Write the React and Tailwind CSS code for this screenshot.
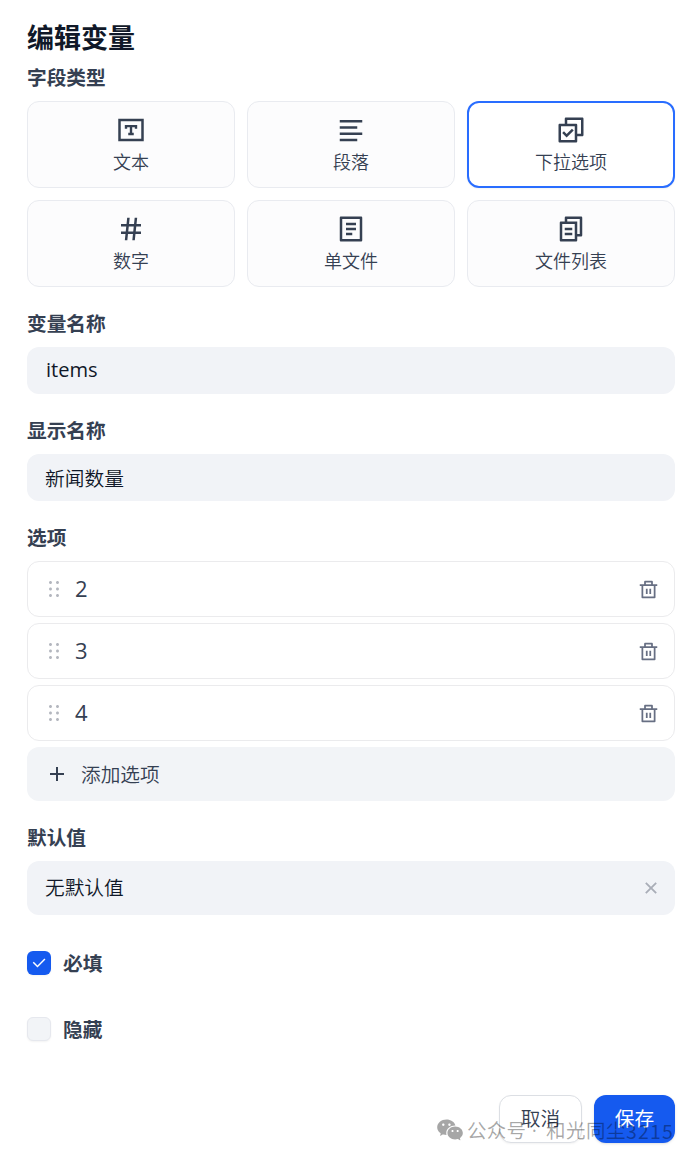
import { useState } from "react";
import {
  RiAddLine,
  RiAlignLeft,
  RiCheckboxMultipleLine,
  RiCheckLine,
  RiCloseLine,
  RiDeleteBinLine,
  RiDraggable,
  RiFileCopy2Line,
  RiFileList2Line,
  RiHashtag,
  RiWechatFill,
} from "react-icons/ri";

function TextBoxIcon({ className }) {
  return (
    <svg viewBox="0 0 24 24" fill="none" stroke="currentColor" className={className}>
      <path d="M2.8 4H21.2V20H2.8Z" strokeWidth="2" />
      <path d="M8 11V8.9H16V11M12 8.9V15M9.8 15.2H14.2" strokeWidth="1.9" />
    </svg>
  );
}

const fieldTypes = [
  { id: "text", label: "文本", Icon: TextBoxIcon },
  { id: "paragraph", label: "段落", Icon: RiAlignLeft },
  { id: "select", label: "下拉选项", Icon: RiCheckboxMultipleLine },
  { id: "number", label: "数字", Icon: RiHashtag },
  { id: "file", label: "单文件", Icon: RiFileList2Line },
  { id: "files", label: "文件列表", Icon: RiFileCopy2Line },
];

function Label({ children }) {
  return <div className="h-[30px] pt-px text-[19.7px] leading-[30px] font-bold text-[#354052]">{children}</div>;
}

function CheckRow({ label, checked, onChange }) {
  return (
    <div className="flex h-6 items-center gap-3">
      <button
        onClick={onChange}
        aria-label={label}
        className={`flex h-6 w-6 items-center justify-center rounded-md shadow-xs ${
          checked ? "bg-[#155aef] text-white" : "border border-[#e6e8ee] bg-[#f2f4f7]"
        }`}
      >
        {checked && <RiCheckLine className="h-[18px] w-[18px]" />}
      </button>
      <span className="pt-px text-[19.7px] leading-6 font-bold text-[#354052]">{label}</span>
    </div>
  );
}

export default function App() {
  const [type, setType] = useState("select");
  const [name, setName] = useState("items");
  const [displayName, setDisplayName] = useState("新闻数量");
  const [options, setOptions] = useState(["2", "3", "4"]);
  const [required, setRequired] = useState(true);
  const [hidden, setHidden] = useState(false);

  return (
    <div className="relative h-[1158px] w-[696px] overflow-hidden bg-white pr-[21px] pl-[27px] font-['Open_Sans','Noto_Sans_CJK_SC',sans-serif] text-[#354052]">
      <h1 className="pt-[18px] text-[27px] leading-[40px] font-bold text-[#101828]">编辑变量</h1>

      {/* Field type */}
      <div className="mt-1">
        <Label>字段类型</Label>
        <div className="mt-[9px] grid grid-cols-3 gap-3">
          {fieldTypes.map(({ id, label, Icon }) => (
            <button
              key={id}
              onClick={() => setType(id)}
              className={`flex h-[87px] flex-col items-center rounded-xl ${
                type === id
                  ? "border-2 border-[#296dff] bg-white pt-3 shadow-xs"
                  : "border border-[#e9ebf0] bg-[#fcfcfd] pt-[13px]"
              }`}
            >
              <Icon className="h-[30px] w-[30px] shrink-0" />
              <span className="mt-1 text-[18px] leading-[27px] font-[350]">{label}</span>
            </button>
          ))}
        </div>
      </div>

      {/* Names */}
      <div className="mt-[21px]">
        <Label>变量名称</Label>
        <input
          value={name}
          onChange={(e) => setName(e.target.value)}
          className="mt-[9px] block h-[47px] w-full rounded-xl bg-[#f1f3f7] pr-[18px] pb-0.5 pl-[19px] text-[20.1px] text-[#101828] outline-none"
        />
      </div>
      <div className="mt-[21px]">
        <Label>显示名称</Label>
        <input
          value={displayName}
          onChange={(e) => setDisplayName(e.target.value)}
          className="mt-[9px] block h-[47px] w-full rounded-xl bg-[#f1f3f7] px-[18px] text-[19.8px] font-[350] text-[#101828] outline-none"
        />
      </div>

      {/* Options */}
      <div className="mt-[21px]">
        <Label>选项</Label>
        <div className="mt-[9px] flex flex-col gap-1.5">
          {options.map((option, i) => (
            <div key={i} className="flex h-14 items-center rounded-xl border border-[#ebebed] bg-white pr-[15px] pl-[14px]">
              <RiDraggable className="h-6 w-6 text-[#b4b7bf]" />
              <span className="ml-[9px] flex-1 pb-0.5 text-[22px] leading-8">{option}</span>
              <button
                onClick={() => setOptions(options.filter((_, n) => n !== i))}
                aria-label="Delete"
                className="text-[#676f83]"
              >
                <RiDeleteBinLine className="h-[21px] w-[21px]" />
              </button>
            </div>
          ))}
          <button
            onClick={() => setOptions([...options, ""])}
            className="flex h-[54px] items-center rounded-xl bg-[#f2f4f7] pl-[18px]"
          >
            <RiAddLine className="h-6 w-6" />
            <span className="ml-3 pt-px text-[19.7px] leading-[30px] font-[350]">添加选项</span>
          </button>
        </div>
      </div>

      {/* Default value */}
      <div className="mt-[21px]">
        <Label>默认值</Label>
        <div className="mt-[9px] flex h-[54px] items-center justify-between rounded-xl bg-[#f1f3f7] pr-[13px] pl-[18px]">
          <span className="text-[19.7px] leading-[30px] font-[350] text-[#101828]">无默认值</span>
          <RiCloseLine className="h-[22px] w-[22px] text-[#a9adb7]" />
        </div>
      </div>

      <div className="mt-9 flex flex-col gap-[42px]">
        <CheckRow label="必填" checked={required} onChange={() => setRequired(!required)} />
        <CheckRow label="隐藏" checked={hidden} onChange={() => setHidden(!hidden)} />
      </div>

      {/* Footer */}
      <div className="mt-[54px] flex justify-end gap-3">
        <button className="h-12 w-[83px] rounded-xl border border-[#dcdfe4] bg-white text-[19.7px] font-[350] shadow-xs">
          取消
        </button>
        <button className="h-12 w-[81px] rounded-xl bg-[#155aef] text-[19.7px] text-white shadow-sm">保存</button>
      </div>

      {/* Watermark */}
      <div className="pointer-events-none absolute top-[1115px] left-[436px] flex h-[30px] items-center text-[19.5px] leading-[30px] text-black/35">
        <RiWechatFill className="h-7 w-7" />
        <span className="ml-[3px] w-[66px] pt-px tracking-[0.3px] whitespace-pre">公众号 ·</span>
        <span className="ml-[13px] pt-px tracking-[0.5px]">和光同尘</span>
        <span className="pt-px font-['Noto_Sans_CJK_SC',sans-serif] tracking-[1.2px]">3215</span>
      </div>
    </div>
  );
}
